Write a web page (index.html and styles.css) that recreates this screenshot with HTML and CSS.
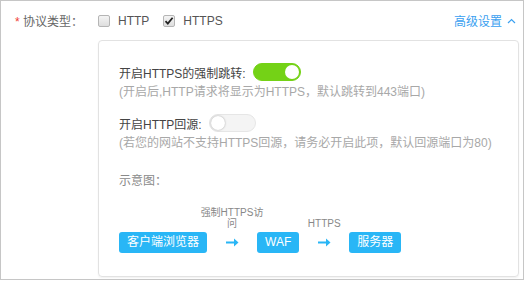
FILE: index.html
```html
<!DOCTYPE html>
<html>
<head>
  <meta charset='utf-8'>
  <title>协议类型</title>
  <link rel="stylesheet" href="styles.css">
</head>
<body>
  <div class="frame">
    <div class="head-row">
      <div class="field-label"><span class="star">*</span> 协议类型：</div>
      <label class="check"><span class="box"></span>HTTP</label>
      <label class="check"><span class="box checked">
        <svg width="10" height="10" viewBox="0 0 10 10"><path d="M1.5 5.2 L3.8 7.6 L8.6 1.8" fill="none" stroke="#222" stroke-width="1.8"/></svg>
      </span>HTTPS</label>
      <a class="advanced">高级设置
        <svg width="9" height="6" viewBox="0 0 9 6"><path d="M1 5 L4.5 1.5 L8 5" fill="none" stroke="#3aa0f0" stroke-width="1.2"/></svg>
      </a>
    </div>

    <div class="panel">
      <div class="opt-row">
        <span>开启HTTPS的强制跳转:</span>
        <span class="switch on"><i></i></span>
      </div>
      <p class="desc">(开启后,HTTP请求将显示为HTTPS，默认跳转到443端口)</p>

      <div class="opt-row second">
        <span>开启HTTP回源:</span>
        <span class="switch"><i></i></span>
      </div>
      <p class="desc">(若您的网站不支持HTTPS回源，请务必开启此项，默认回源端口为80)</p>

      <p class="diagram-title">示意图：</p>

      <div class="diagram">
        <span class="node">客户端浏览器</span>
        <div class="step">
          <span class="step-label">强制HTTPS访问</span>
          <span class="arrow"><svg width="13" height="9" viewBox="0 0 13 9"><path d="M0 3.5 H8 V0.5 L12.5 4.5 L8 8.5 V5.5 H0 Z" fill="#29b6f6"/></svg></span>
        </div>
        <span class="node">WAF</span>
        <div class="step">
          <span class="step-label">HTTPS</span>
          <span class="arrow"><svg width="13" height="9" viewBox="0 0 13 9"><path d="M0 3.5 H8 V0.5 L12.5 4.5 L8 8.5 V5.5 H0 Z" fill="#29b6f6"/></svg></span>
        </div>
        <span class="node">服务器</span>
      </div>
    </div>
  </div>
</body>
</html>
```

FILE: styles.css
```css
body {
  margin: 0;
  background: #fff;
  font-family: "Liberation Sans", "Noto Sans CJK SC", sans-serif;
  font-size: 12px;
  color: #444;
}

.frame {
  width: 524px;
  height: 280px;
  border: 1px solid #c6c6c6;
  box-sizing: border-box;
}

/* 첫 줄 */
.head-row {
  display: flex;
  align-items: center;
  height: 39px;
  padding-right: 7px;
}
.field-label {
  width: 97px;
  padding-left: 14px;
  box-sizing: border-box;
  color: #666;
}
.star {
  color: #f04134;
}
.check {
  display: flex;
  align-items: center;
  margin-right: 14px;
  color: #555;
}
.box {
  display: flex;
  align-items: center;
  justify-content: center;
  width: 12px;
  height: 12px;
  margin-right: 8px;
  border: 1px solid #b5b5b5;
  border-radius: 2px;
  background: linear-gradient(#f4f4f4, #dedede);
  box-sizing: border-box;
}
.advanced {
  margin-left: auto;
  display: flex;
  align-items: center;
  color: #3aa0f0;
}
.advanced svg {
  margin-left: 5px;
}

/* 패널 */
.panel {
  margin-left: 97px;
  width: 421px;
  height: 237px;
  padding: 21px 20px 0;
  border: 1px solid #e2e2e2;
  border-radius: 4px;
  box-shadow: 0 1px 2px rgba(0, 0, 0, 0.06);
  box-sizing: border-box;
}
.opt-row {
  display: flex;
  align-items: center;
  height: 20px;
  color: #444;
}
.opt-row.second {
  margin-top: 11px;
}
.switch {
  position: relative;
  display: block;
  width: 47px;
  height: 18px;
  margin-left: 7px;
  border-radius: 10px;
  background: #f4f4f4;
  border: 1px solid #e6e6e6;
  box-sizing: border-box;
}
.switch i {
  position: absolute;
  top: 1px;
  left: 1px;
  width: 14px;
  height: 14px;
  border-radius: 50%;
  background: #fff;
  box-shadow: 0 0 2px rgba(0, 0, 0, 0.35);
}
.switch.on {
  margin-left: 7px;
  width: 48px;
  background: #74d216;
  border-color: #74d216;
}
.switch.on i {
  left: auto;
  right: 1px;
  box-shadow: none;
}
.desc {
  margin: 0;
  line-height: 20px;
  color: #a8a8a8;
}
.diagram-title {
  margin: 18px 0 0;
  line-height: 20px;
  color: #8a8a8a;
}

/* 흐름도 */
.diagram {
  display: flex;
  align-items: flex-end;
  margin-top: 16px;
}
.node {
  height: 21px;
  line-height: 21px;
  padding: 0 8px;
  border-radius: 3px;
  background: #29b6f6;
  color: #fff;
}
.step {
  width: 50px;
  display: flex;
  flex-direction: column;
  align-items: center;
}
.step-label {
  width: 68px;
  margin-bottom: 3px;
  text-align: center;
  font-size: 10px;
  line-height: 11px;
  color: #888;
}
.arrow {
  height: 21px;
  display: flex;
  align-items: center;
}
```
